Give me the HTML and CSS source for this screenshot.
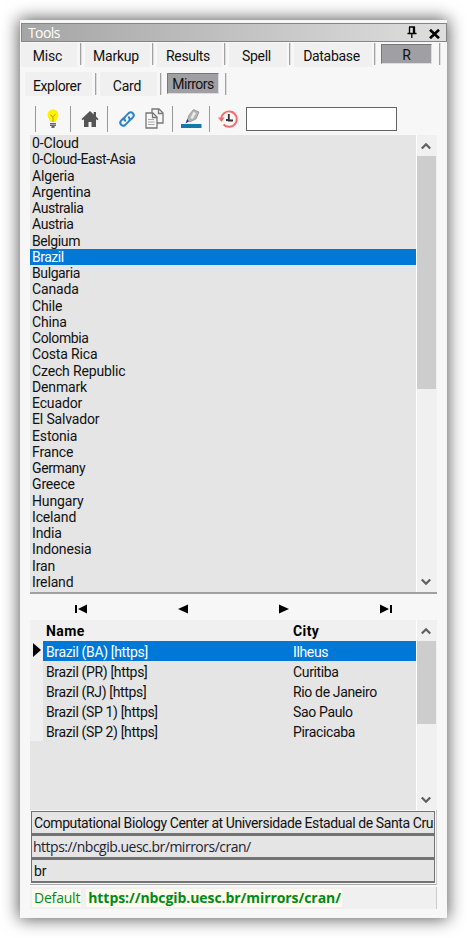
FILE: index.html
```html
<!DOCTYPE html>
<html lang="en">
<head>
<meta charset="utf-8">
<title>Tools</title>
<link rel="stylesheet" href="styles.css">
</head>
<body>
<main class="panel">
  <header class="title"><span class="title-text">Tools</span>
    <svg class="pin" width="10" height="13" viewBox="0 0 10 13"><path d="M2.5 1v6M2 1h6M6.5 1v6M7.5 1v6M0.5 7.5h9M4.8 8v4" fill="none" stroke="#000" stroke-width="1.3"/></svg>
    <svg class="close" width="11" height="10" viewBox="0 0 11 10"><path d="M1 .8l9 8.4M10 .8L1 9.2" stroke="#000" stroke-width="2.7"/></svg>
  </header>
  <nav class="tabs first">
    <span class="tab misc">Misc</span><i class="sep"></i>
    <span class="tab markup">Markup</span><i class="sep"></i>
    <span class="tab results">Results</span><i class="sep"></i>
    <span class="tab spell">Spell</span><i class="sep"></i>
    <span class="tab database">Database</span><i class="sep"></i>
    <span class="tab r active">R</span><i class="sep"></i>
  </nav>
  <nav class="tabs second">
    <span class="tab explorer">Explorer</span><i class="sep"></i>
    <span class="tab card">Card</span><i class="sep"></i>
    <span class="tab mirrors active">Mirrors</span><i class="sep"></i>
  </nav>
  <div class="toolbar">
    <i class="bar"></i>
    <svg class="bulb" width="12" height="20" viewBox="0 0 12 20"><path d="M6 .5C2.700.5.6 2.800.6 6c0 2.500 2 4 2.500 7h5.800c.5-3 2.500-4.500 2.500-7C11.400 2.800 9.300.5 6 .5z" fill="#fff100"/><path d="M3.500 5.500L5.500 8l1-1 2-1.500M6 8v5" fill="none" stroke="#b4a400"/><path d="M3 14h6v3H3zM4.500 17h3v2h-3z" fill="#666"/><path d="M3 15.500h6" stroke="#aaa"/></svg>
    <i class="bar"></i>
    <svg class="home" width="18" height="16" viewBox="0 0 18 16"><path d="M9 0L.5 8l1.100 1.300L3 8.200V16h4.500v-5h3v5H15V8.200l1.400 1.100L17.500 8 15 5.600V1h-2.300v2.400z" fill="#555"/></svg>
    <i class="bar"></i>
    <svg class="link" width="18" height="18" viewBox="0 0 18 18"><g fill="none" stroke="#2b82c9" stroke-width="2" stroke-linecap="round"><path d="M7.200 10.800a3 3 0 0 1 0-4.200l3.700-3.700a3 3 0 0 1 4.200 4.200l-2.600 2.600"/><path d="M10.800 7.200a3 3 0 0 1 0 4.200l-3.700 3.700a3 3 0 0 1-4.200-4.200l2.600-2.600"/></g></svg>
    <svg class="copy" width="19" height="21" viewBox="0 0 19 21"><g fill="#f7f7f7" stroke="#777" stroke-width="1.300"><path d="M7 1h7l4 4v10H7z"/><path d="M13.500 1v4.500H18" fill="none"/><path d="M1 5h7l4 4v11H1z"/><path d="M7.500 5v4.500H12" fill="none"/></g><path d="M3 11.500h6M3 14h6.500M3 16.500h6.500" stroke="#aaa"/></svg>
    <i class="bar"></i>
    <svg class="pen" width="21" height="21" viewBox="0 0 21 21"><path d="M12.500 1.500L18 4l-3 7-5.500 2.500L6 13 8 7z" fill="#b4b4b4" stroke="#888" stroke-width=".7"/><path d="M12.500 4l2.500 1-3.500 6-2-1z" fill="#eee"/><path d="M4.500 15.500L6.300 11l1.500 2.500z" fill="#2525c8"/><path d="M0 16h20.500v4H0z" fill="#1877a7"/></svg>
    <i class="bar"></i>
    <svg class="history" width="20" height="18" viewBox="0 0 20 18"><path d="M3.300 8.500a7.700 7.700 0 1 1 2.200 6" fill="none" stroke="#f8696b" stroke-width="1.900"/><path d="M0 7.500h6.500L3.500 12z" fill="#f8696b"/><path d="M10.800 4v6.500H15M10.800 10H8" fill="none" stroke="#333" stroke-width="1.800"/></svg>
    <input class="search" type="text" aria-label="Filter">
  </div>
  <section class="list-wrap">
    <ul class="list">
      <li>0-Cloud</li><li class="narrow">0-Cloud-East-Asia</li><li>Algeria</li><li>Argentina</li><li class="narrow">Australia</li><li class="narrow">Austria</li><li class="narrow">Belgium</li><li class="selected">Brazil</li><li class="narrow">Bulgaria</li><li>Canada</li><li>Chile</li><li>China</li><li class="narrow">Colombia</li><li>Costa Rica</li><li>Czech Republic</li><li>Denmark</li><li>Ecuador</li><li>El Salvador</li><li>Estonia</li><li>France</li><li class="narrow">Germany</li><li>Greece</li><li>Hungary</li><li>Iceland</li><li>India</li><li>Indonesia</li><li>Iran</li><li>Ireland</li>
    </ul>
    <div class="scroll"><svg class="arrow" width="10" height="8" viewBox="0 0 10 8"><path d="M.8 6.500L5 2.300l4.200 4.200" fill="none" stroke="#606060" stroke-width="2.300"/></svg><b class="thumb tall"></b><svg class="arrow down" width="10" height="8" viewBox="0 0 10 8"><path d="M.8 1.500L5 5.700l4.200-4.200" fill="none" stroke="#606060" stroke-width="2.300"/></svg></div>
  </section>
  <div class="navigator">
    <svg width="14" height="10" viewBox="0 0 14 10"><path d="M1 1h2v8H1zM13 .5v9L4 5z"/></svg>
    <svg width="14" height="10" viewBox="0 0 14 10"><path d="M12 .5v9L2 5z"/></svg>
    <svg width="14" height="10" viewBox="0 0 14 10"><path d="M2 .5v9L12 5z"/></svg>
    <svg width="14" height="10" viewBox="0 0 14 10"><path d="M11 1h2v8h-2zM1 .5v9L10 5z"/></svg>
  </div>
  <section class="grid-wrap">
    <div class="grid">
      <div class="row head"><i></i><span>Name</span><span>City</span></div>
      <div class="row current"><i><svg width="8" height="14" viewBox="0 0 8 14"><path d="M0 0l8 7-8 7z"/></svg></i><span>Brazil (BA) [https]</span><span>Ilheus</span></div>
      <div class="row"><i></i><span>Brazil (PR) [https]</span><span>Curitiba</span></div>
      <div class="row"><i></i><span>Brazil (RJ) [https]</span><span>Rio de Janeiro</span></div>
      <div class="row"><i></i><span>Brazil (SP 1) [https]</span><span>Sao Paulo</span></div>
      <div class="row"><i></i><span>Brazil (SP 2) [https]</span><span>Piracicaba</span></div>
    </div>
    <div class="scroll"><svg class="arrow" width="10" height="8" viewBox="0 0 10 8"><path d="M.8 6.500L5 2.300l4.200 4.200" fill="none" stroke="#606060" stroke-width="2.300"/></svg><b class="thumb short"></b><svg class="arrow down" width="10" height="8" viewBox="0 0 10 8"><path d="M.8 1.500L5 5.700l4.200-4.200" fill="none" stroke="#606060" stroke-width="2.300"/></svg></div>
  </section>
  <section class="fields">
    <div class="field org">Computational Biology Center at Universidade Estadual de Santa Cru</div>
    <div class="field url">https://nbcgib.uesc.br/mirrors/cran/</div>
    <div class="field code">br</div>
  </section>
  <footer class="status"><span class="label">Default</span><span class="default-url">https://nbcgib.uesc.br/mirrors/cran/</span></footer>
</main>
</body>
</html>
```
FILE: styles.css
```css
* { box-sizing: border-box; }
html, body { margin: 0; height: 938px; overflow: hidden; }
body { background: #fff; font: 14px/16px Roboto, "Liberation Sans", sans-serif; color: #111; padding: 20px; }
svg { display: block; flex: none; }
i { font-style: normal; }
.panel { width: 427px; height: 898px; background: #f7f7f7; padding-top: 3px; display: flex; flex-direction: column; box-shadow: 0 0 16px 1px rgba(0,0,0,.66); }
.title { height: 19px; flex: none; margin: 0 0 0 1px; border: 1px solid #858585; background: linear-gradient(90deg, #a5a5a5, #dedede); display: flex; align-items: center; padding: 0 6px 0 6px; }
.title-text { color: #fff; font: 14px/17px "Open Sans", sans-serif; letter-spacing: -.6px; flex: 1; }
.pin { margin-right: 12px; }
.close { margin-top: 2px; }
.tabs { display: flex; flex: none; align-items: flex-start; }
.tab { background: #f0f0f0; text-align: center; height: 24px; line-height: 27px; white-space: nowrap; flex: none; }
.sep { width: 2px; height: 22px; background: linear-gradient(90deg, #a2a2a2 50%, #ddd 50%); flex: none; }
.first { height: 30px; padding-top: 1px; }
.second { height: 32px; padding: 0 0 0 5px; }
.second .tab { line-height: 28px; }
.second .sep { margin-top: 1px; }
.misc { width: 56px; margin: 0 3px 0 1px; padding-right: 3px; letter-spacing: -.15px; }
.markup { width: 65px; margin: 0 2px 0 3px; padding-right: 3px; letter-spacing: -.2px; }
.results { width: 65px; margin: 0 2px 0 3px; padding-right: 3px; letter-spacing: -.3px; }
.spell { width: 58px; margin: 0 2px 0 3px; padding-right: 3px; letter-spacing: -.3px; }
.database { width: 78px; margin: 0 2px 0 3px; padding-right: 3px; letter-spacing: -.3px; }
.tab.active { background: #a0a0a4; border: 1px solid #777; border-right-color: #ddd; border-bottom-color: #ddd; height: 20px; line-height: 20px; margin-top: 1px; }
.r.active { width: 51px; margin: 1px 7px 0 5px; }
.explorer { width: 67px; margin-right: 3px; padding-right: 3px; letter-spacing: -.35px; }
.card { width: 57px; margin: 0 3px; padding-right: 3px; letter-spacing: -.2px; }
.second .mirrors.active { width: 52px; height: 21px; margin: 1px 6px 0 5px; letter-spacing: -.5px; line-height: 20px; }
.toolbar { height: 31px; flex: none; display: flex; align-items: center; padding: 0 0 2px 15px; }
.bar { width: 1px; height: 26px; background: #999; flex: none; }
.bulb { margin: 0 11px 0 11px; }
.home { margin: 0 8px 0 10px; }
.link { margin: 0 9px 0 10px; }
.copy { margin-right: 8px; }
.pen { margin: 0 7px 0 8px; }
.history { margin: 0 8px 0 8px; }
.search { width: 151px; height: 24px; border: 1px solid #646464; background: #fff; padding: 0 3px; border-radius: 0; }
.list-wrap { display: flex; height: 459px; flex: none; margin: 0 10px; border-bottom: 2px solid #a0a0a0; }
.list { width: 386px; background: #e5e5e5; margin: 0; padding: 0; list-style: none; }
.list li { height: 16.25px; line-height: 17.4px; padding-left: 2px; letter-spacing: -.15px; white-space: nowrap; }
.list .narrow { letter-spacing: -.4px; }
.list .selected, .current span { background: #0078d7; color: #fff; }
.list .selected { letter-spacing: -.5px; }
.scroll { width: 21px; background: #f0f0f0; border-left: 1px solid #fff; display: flex; flex-direction: column; align-items: flex-start; }
.arrow { margin: 7px 0 6px 4px; }
.down { margin: auto 0 6px 4px; }
.thumb { width: 19px; background: #cdcdcd; }
.tall { height: 233px; }
.short { height: 83px; }
.navigator { height: 26px; flex: none; display: flex; justify-content: space-between; align-items: center; padding: 4px 54px 0 54px; }
.grid-wrap { height: 190px; flex: none; display: flex; margin: 0 10px; }
.grid { width: 386px; background: #e5e5e5; }
.row { display: grid; grid-template-columns: 13px 247px 126px; grid-template-rows: 20px; height: 20px; line-height: 23px; }
.row i { background: #f0f0f0; display: flex; align-items: center; justify-content: flex-end; padding: 0 2px 2px 0; }
.row span { padding-left: 3px; white-space: nowrap; letter-spacing: -.35px; }
.head { height: 21px; line-height: 23px; background: #f0f0f0; font-weight: 700; color: #000; }
.row.head span { letter-spacing: .4px; }
.fields { margin: 0 10px; padding: 1px 1px 1px; border-right: 1px solid #ccc; border-bottom: 1px solid #aaa; height: 75px; flex: none; }
.field { height: 24px; border: 1px solid #737373; border-bottom-width: 2px; background: #e5e5e5; line-height: 22px; padding-left: 2px; white-space: nowrap; overflow: hidden; }
.org { letter-spacing: -.41px; }
.url { font: 14px/21px "Open Sans", sans-serif; letter-spacing: -.5px; padding-left: 1px; color: #223; }
.status { height: 22px; flex: none; margin: 2px 10px 0; background: #f0f0f0; border-right: 1px solid #ccc; display: flex; align-items: center; padding-left: 2px; font: 14px/18px "Open Sans", sans-serif; color: #008a16; }
.label, .default-url { background: #fffbee; padding: 0 1px 0 2px; }
.label { margin-right: 5px; letter-spacing: -.2px; }
.default-url { font-weight: 700; letter-spacing: -.07px; }
```
